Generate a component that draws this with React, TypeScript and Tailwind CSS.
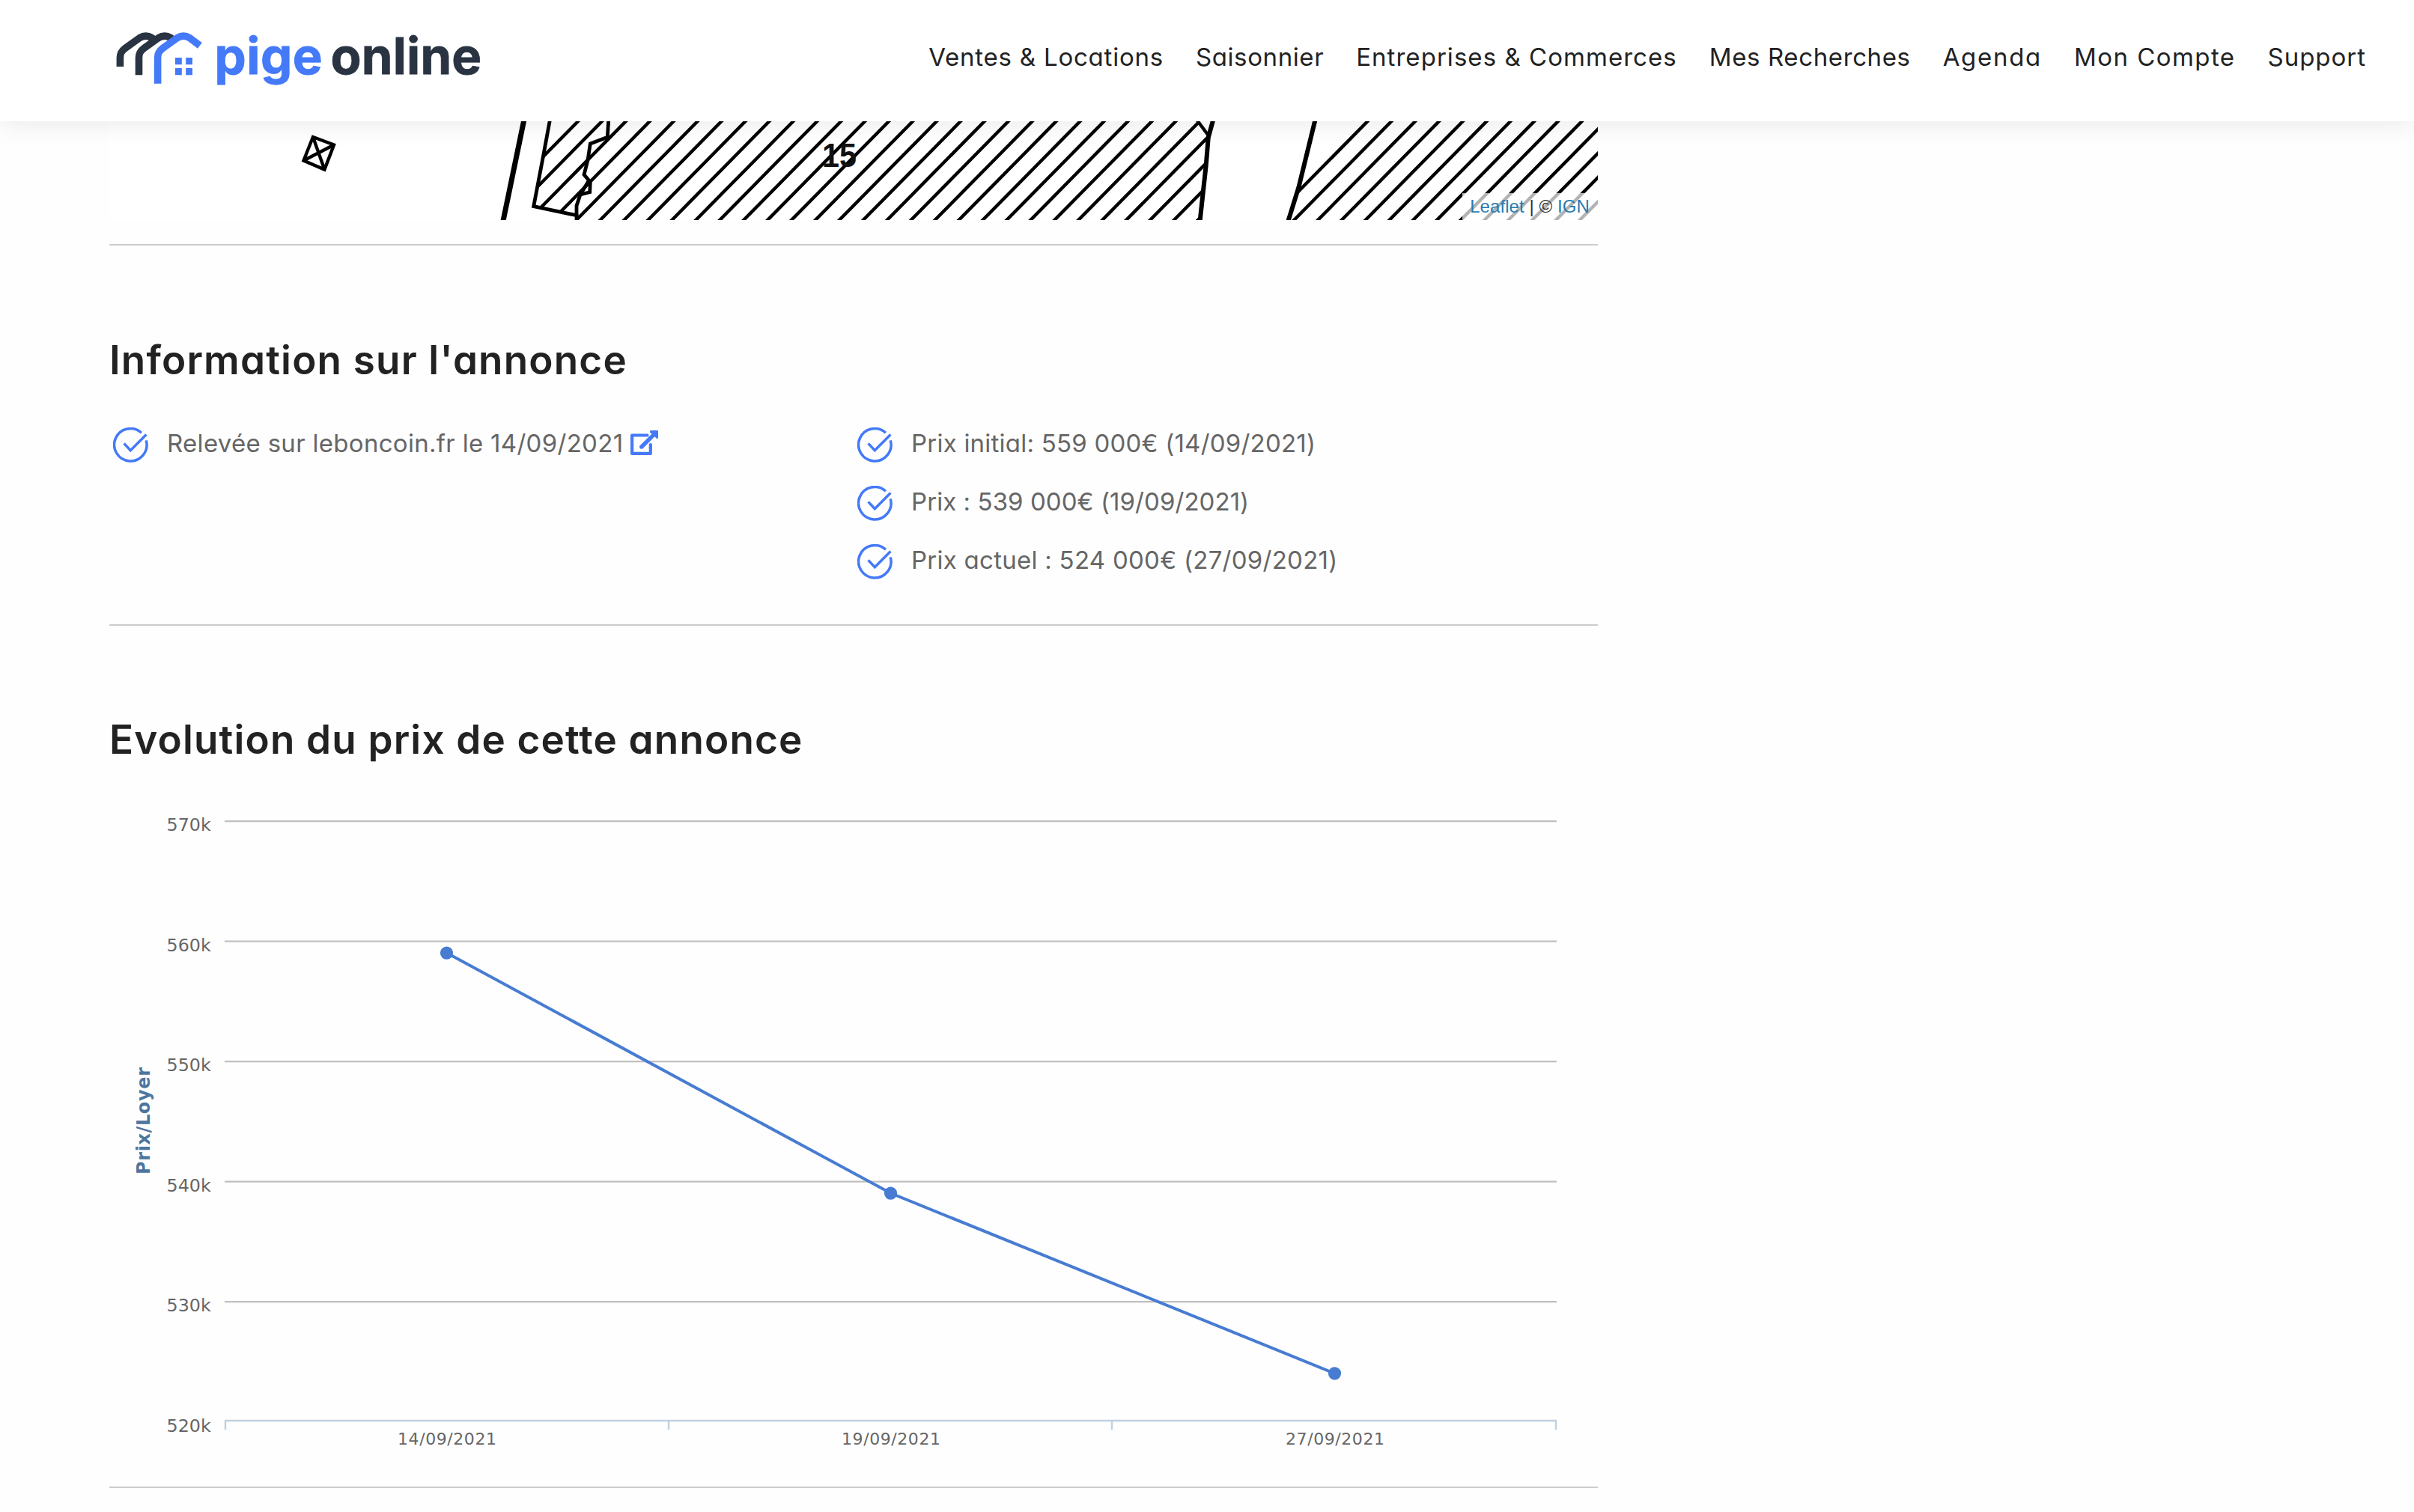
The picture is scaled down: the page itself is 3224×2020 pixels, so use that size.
import React from "react";

interface NavItem {
  label: string;
  tracking: string;
}

interface PricePoint {
  date: string;
  price: number;
}

const navItems: NavItem[] = [
  { label: "Ventes & Locations", tracking: "tracking-[0.78px]" },
  { label: "Saisonnier", tracking: "tracking-[0.6px]" },
  { label: "Entreprises & Commerces", tracking: "tracking-[1.04px]" },
  { label: "Mes Recherches", tracking: "tracking-[0.62px]" },
  { label: "Agenda", tracking: "tracking-[1.7px]" },
  { label: "Mon Compte", tracking: "tracking-[1.44px]" },
  { label: "Support", tracking: "tracking-[0.98px]" },
];

const prices = [
  { label: "Prix initial: 559 000€ (14/09/2021)", tracking: "tracking-[0.22px]" },
  { label: "Prix : 539 000€ (19/09/2021)", tracking: "tracking-[0.06px]" },
  { label: "Prix actuel : 524 000€ (27/09/2021)", tracking: "tracking-[0.26px]" },
];

const history: PricePoint[] = [
  { date: "14/09/2021", price: 559 },
  { date: "19/09/2021", price: 539 },
  { date: "27/09/2021", price: 524 },
];

const Logo = () => (
  <svg width="500" height="90" viewBox="0 0 500 90" className="block">
    <g fill="none" strokeWidth="9.6">
      <path
        d="M6.4 62 V50 C6.4 44 8.3 41 13.3 37.3 L32.4 23.7 C37.7 20.5 43.7 20.5 49 23.7 L53 26.5"
        stroke="#2a3342"
      />
      <path
        d="M31.5 73.3 V50 C31.5 44 33.4 41 38.4 37.3 L57.6 23.7 C62.9 20.5 68.9 20.5 74.2 23.7 L77 25.6"
        stroke="#2a3342"
      />
      <path
        d="M56.6 84.7 V50 C56.6 44 58.5 41 63.5 37.3 L82.7 23.7 C88 20.5 94 20.5 99.3 23.7 L112.9 33.8"
        stroke="#4479f8"
      />
    </g>
    <path
      d="M80 50 h8.8 v9.3 h-8.8z M94.2 50 h8.8 v9.3 h-8.8z M80 64 h8.8 v9.3 h-8.8z M94.2 64 h8.8 v9.3 h-8.8z"
      fill="#4479f8"
    />
    <g
      className="font-['Inter'] font-bold [font-feature-settings:'cv11']"
      fontSize="67"
      strokeWidth="0.8"
    >
      <text x="132.6" y="71.6" fill="#4479f8" stroke="#4479f8" textLength="144" lengthAdjust="spacing">
        pige
      </text>
      <text x="287.6" y="71.6" fill="#2a3342" stroke="#2a3342" textLength="201.6" lengthAdjust="spacing">
        online
      </text>
    </g>
  </svg>
);

const CheckIcon = () => (
  <svg width="47" height="47" viewBox="0 0 47 47" className="shrink-0">
    <g fill="none" stroke="#4479f8" strokeWidth="3.5">
      <path d="M44.2 17.4 A21.7 21.7 0 1 1 37.9 7.2" />
      <path d="M14.6 21.4 L23.3 30.7 L44.4 9.4" />
    </g>
  </svg>
);

const LinkIcon = () => (
  <svg width="37" height="33" viewBox="0 0 37 33" className="shrink-0">
    <g fill="none" stroke="#4479f8">
      <path d="M22.5 6.5 H2.1 V30.9 H26.8 V19" strokeWidth="4.2" strokeLinejoin="round" strokeLinecap="round" />
      <path d="M14.8 22 L31 5.8" strokeWidth="5.4" strokeLinecap="round" />
    </g>
    <path d="M27 0 H36 Q37 0 37 1 V10 Q36.6 12 35 10.8 L26 2.6 Q25.4 0.6 27 0z" fill="#4479f8" />
  </svg>
);

// oblique hatching of a building, one stroke every `step` px
const hatch = (start: number, step: number, count: number) =>
  Array.from({ length: count }, (_, i) => {
    const x = start + i * step;
    return `M${x} 134 L${x + 134} -2`;
  }).join(" ");

const CadastreMap = () => (
  <div className="relative h-[132px] w-full overflow-hidden bg-white">
    <svg width="1988" height="132" viewBox="0 0 1988 132" className="block">
      <defs>
        <clipPath id="building-left">
          <path d="M588.3 0 L566.7 113.7 L624 125.7 V132 H1456.6 L1464.8 58 L1467.7 18.7 L1453 0z" />
        </clipPath>
        <clipPath id="building-right">
          <path d="M1610.3 0 L1575 132 H1988 V0z" />
        </clipPath>
      </defs>
      <g fill="none" stroke="#000" strokeWidth="4.4">
        <path d={hatch(494, 31.93, 32)} clipPath="url(#building-left)" />
        <path d={hatch(1548.5, 31.8, 15)} clipPath="url(#building-right)" />
        <path d="M272 21 L300 31.5 L287.4 64.5 L259.5 52.5z M272 21 L287.4 64.5 M300 31.5 L259.5 52.5" />
        <path d="M588.3 -1 L580 44 L566.7 113.7 L624 125.7 V133" strokeWidth="4.8" />
        <path
          d="M666.7 -1 L665.3 21.3 L642.3 30 L639 52 L634 71.3 L642.3 81 L641.7 94.7 L629 98 L624 113 V126 M640 80 L629 98"
          strokeWidth="4.8"
        />
        <path d="M553.7 -1 L526 133" strokeWidth="7" />
        <path d="M1453 -1 L1467.7 18.7" />
        <path d="M1474 -1 L1467.7 22 L1464.8 58 L1456.6 133" strokeWidth="6" />
        <path d="M1610.3 -1 L1600 41 L1588.5 88 L1574.5 133" strokeWidth="6" />
      </g>
      <text
        x="952"
        y="61"
        className="font-['Liberation_Sans'] font-bold"
        fontSize="44"
        textLength="46"
        lengthAdjust="spacingAndGlyphs"
        fill="#111"
      >
        15
      </text>
    </svg>
    <div className="absolute right-0 bottom-0 flex h-9 items-center bg-white/70 pr-[11px] pl-2.5 font-['Liberation_Sans',sans-serif] text-[24px] leading-9 tracking-[0.08px] whitespace-pre text-[#333]">
      <a className="text-[#2a7ab0]">Leaflet</a> | © <a className="text-[#2a7ab0]">IGN</a>
    </div>
  </div>
);

const Chart = () => {
  const left = 154;
  const right = 1933;
  const band = (right - left) / 3;
  const toX = (i: number) => left + band * (i + 0.5);
  const toY = (price: number) => 78.5 + (570 - price) * 16.05;
  const grid = [570, 560, 550, 540, 530];

  return (
    <svg width="1988" height="968" viewBox="0 0 1988 968" className="block">
      {grid.map((v) => (
        <path key={v} d={`M${left} ${toY(v) + 0.7} H${right}`} stroke="#c0c0c0" strokeWidth="2.2" />
      ))}
      <path
        d={`M${left} 880 H${right} M${left + 1} 880 V892 M${left + band} 880 V892 M${left + band * 2 - 1} 880 V892 M${right - 1} 880 V892`}
        fill="none"
        stroke="#c0d0e0"
        strokeWidth="2.4"
      />
      <g className="font-['DejaVu_Sans']" fill="#666">
        {[...grid, 520].map((v) => (
          <text key={v} x="135.8" y={toY(v) + 13.5} fontSize="23.8" textAnchor="end">
            {v}k
          </text>
        ))}
        {history.map((p, i) => (
          <text
            key={p.date}
            x={toX(i) - 65.5}
            y="911.5"
            fontSize="22"
            textLength="132"
            lengthAdjust="spacing"
          >
            {p.date}
          </text>
        ))}
      </g>
      <text
        transform="translate(54 551) rotate(-90)"
        className="font-['DejaVu_Sans'] font-bold"
        fontSize="24"
        fill="#4d759e"
        textLength="143"
        lengthAdjust="spacing"
      >
        Prix/Loyer
      </text>
      <polyline
        points={history.map((p, i) => `${toX(i)},${toY(p.price)}`).join(" ")}
        fill="none"
        stroke="#477cd2"
        strokeWidth="4"
      />
      {history.map((p, i) => (
        <circle key={p.date} cx={toX(i)} cy={toY(p.price)} r="8.6" fill="#477cd2" />
      ))}
    </svg>
  );
};

export default function App() {
  return (
    <div className="min-h-[2020px] w-full overflow-hidden bg-[#fefefe] font-['Inter',sans-serif] text-[#222] [font-feature-settings:'cv11']">
      <header className="relative z-10 flex h-[162px] items-start justify-between bg-white pr-[64px] pl-[154px] shadow-[0_0_36px_rgba(0,0,0,0.1)]">
        <a className="pt-[27px]">
          <Logo />
        </a>
        <nav className="flex gap-[43px] pt-[52px] text-[33px] leading-[48px]">
          {navItems.map((item) => (
            <a key={item.label} className={`whitespace-nowrap ${item.tracking}`}>
              {item.label}
            </a>
          ))}
        </nav>
      </header>

      <main className="ml-[146px] w-[1988px]">
        <CadastreMap />
        <hr className="mt-8 border-t-2 border-[#ccc]" />

        <section>
          <h2 className="mt-[123px] text-[53px] leading-[60px] font-semibold tracking-[1.17px]">
            Information sur l'annonce
          </h2>
          <div className="mt-[56px] grid h-[267px] grid-cols-2 text-[33px] leading-[48px] text-[#666]">
            <ul className="pl-[5px]">
              <li className="flex items-start">
                <span className="mt-1">
                  <CheckIcon />
                </span>
                <span className="mt-px ml-[25px] tracking-[0.3px] whitespace-nowrap">
                  Relevée sur leboncoin.fr le 14/09/2021
                </span>
                <span className="mt-2 ml-[10px]">
                  <LinkIcon />
                </span>
              </li>
            </ul>
            <ul className="flex flex-col gap-[27px] pl-[5px]">
              {prices.map((p) => (
                <li key={p.label} className="flex items-start">
                  <span className="mt-1">
                    <CheckIcon />
                  </span>
                  <span className={`mt-px ml-[25px] whitespace-nowrap ${p.tracking}`}>{p.label}</span>
                </li>
              ))}
            </ul>
          </div>
          <hr className="border-t-2 border-[#ccc]" />
        </section>

        <section>
          <h2 className="mt-[122px] text-[53px] leading-[60px] font-semibold tracking-[1.16px]">
            Evolution du prix de cette annonce
          </h2>
          <Chart />
          <hr className="border-t-2 border-[#ccc]" />
        </section>
      </main>
    </div>
  );
}
